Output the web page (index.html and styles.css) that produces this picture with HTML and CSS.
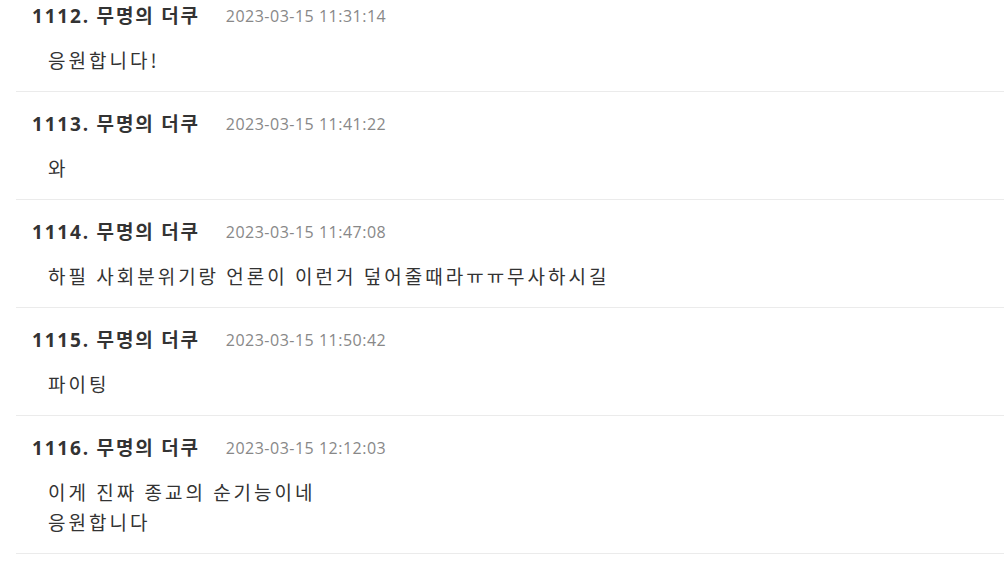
FILE: index.html
```html
<!DOCTYPE html>
<html>
<head>
    <meta charset="UTF-8">
    <title>댓글</title>
    <link rel="stylesheet" href="styles.css">
</head>
<body>
    <ul class="comment-list">
        <li class="comment">
            <div class="comment-head">
                <span class="comment-name">1112. 무명의 더쿠</span>
                <span class="comment-date">2023-03-15 11:31:14</span>
            </div>
            <p class="comment-body">응원합니다!</p>
        </li>
        <li class="comment">
            <div class="comment-head">
                <span class="comment-name">1113. 무명의 더쿠</span>
                <span class="comment-date">2023-03-15 11:41:22</span>
            </div>
            <p class="comment-body">와</p>
        </li>
        <li class="comment">
            <div class="comment-head">
                <span class="comment-name">1114. 무명의 더쿠</span>
                <span class="comment-date">2023-03-15 11:47:08</span>
            </div>
            <p class="comment-body">하필 사회분위기랑 언론이 이런거 덮어줄때라ㅠㅠ무사하시길</p>
        </li>
        <li class="comment">
            <div class="comment-head">
                <span class="comment-name">1115. 무명의 더쿠</span>
                <span class="comment-date">2023-03-15 11:50:42</span>
            </div>
            <p class="comment-body">파이팅</p>
        </li>
        <li class="comment">
            <div class="comment-head">
                <span class="comment-name">1116. 무명의 더쿠</span>
                <span class="comment-date">2023-03-15 12:12:03</span>
            </div>
            <p class="comment-body">이게 진짜 종교의 순기능이네<br>응원합니다</p>
        </li>
    </ul>
</body>
</html>
```

FILE: styles.css
```css
body {
    background-color: #FFFFFF;
    margin: 0;
    font-family: "Open Sans", "Noto Sans CJK KR", sans-serif;
    overflow: hidden;
}
.comment-list {
    list-style: none;
    margin: -16px 0 0 16px;
    padding: 0;
}
.comment {
    border-bottom: 1px solid #EBEBEB;
    padding: 17px 16px 16px 16px;
}
.comment-head {
    display: flex;
    align-items: center;
    gap: 26px;
    line-height: 30px;
}
.comment-name {
    color: #333333;
    font-size: 19px;
    font-weight: bold;
    letter-spacing: 1.8px;
}
.comment-date {
    color: #888888;
    font-size: 16px;
    letter-spacing: 0.5px;
}
.comment-body {
    color: #333333;
    font-family: "Noto Sans CJK KR", sans-serif;
    font-size: 19px;
    letter-spacing: 3px;
    line-height: 30px;
    margin: 14px 0 0 16px;
}
```
